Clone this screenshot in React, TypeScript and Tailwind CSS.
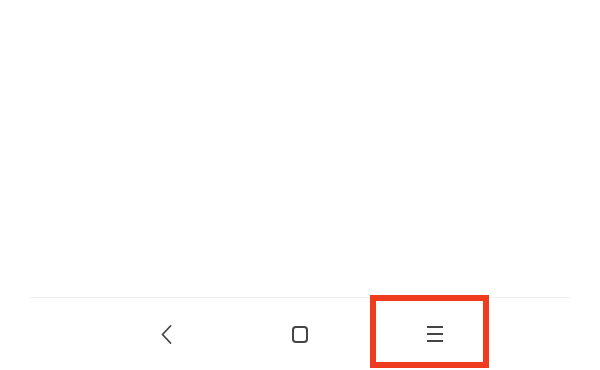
// Android-style bottom navigation with a highlighted "menu" key
const navKeyClass = "flex h-full items-center justify-center text-[#444444]";

export default function App() {
  return (
    <div className="relative flex h-[370px] w-[600px] flex-col overflow-hidden bg-white font-['Roboto',sans-serif]">
      <div className="h-[297px] shrink-0" />
      <div className="mx-[30px] h-px shrink-0 bg-[#f0f0f0]" />
      <nav className="mx-auto grid h-[72px] w-[400px] grid-cols-3">
        <div className={navKeyClass}>
          <svg width="11" height="19" viewBox="0 0 11 19" fill="none" stroke="currentColor" strokeWidth="1.8" strokeLinecap="round" strokeLinejoin="round">
            <path d="M9.5 1 L1.5 9.5 L9.5 18" />
          </svg>
        </div>
        <div className={navKeyClass}>
          <span className="block h-[17px] w-4 rounded-[4px] border-2 border-[#444444]" />
        </div>
        <div className={`${navKeyClass} pl-1`}>
          <svg width="16" height="16" viewBox="0 0 16 16" fill="none" stroke="currentColor" strokeWidth="1.9">
            <path d="M0 1h16M0 8h16M0 15h16" />
          </svg>
        </div>
      </nav>
      <div className="pointer-events-none absolute left-[370px] top-[295px] h-[73px] w-[119px] border-[6px] border-[#ef3b1e]" />
    </div>
  );
}
